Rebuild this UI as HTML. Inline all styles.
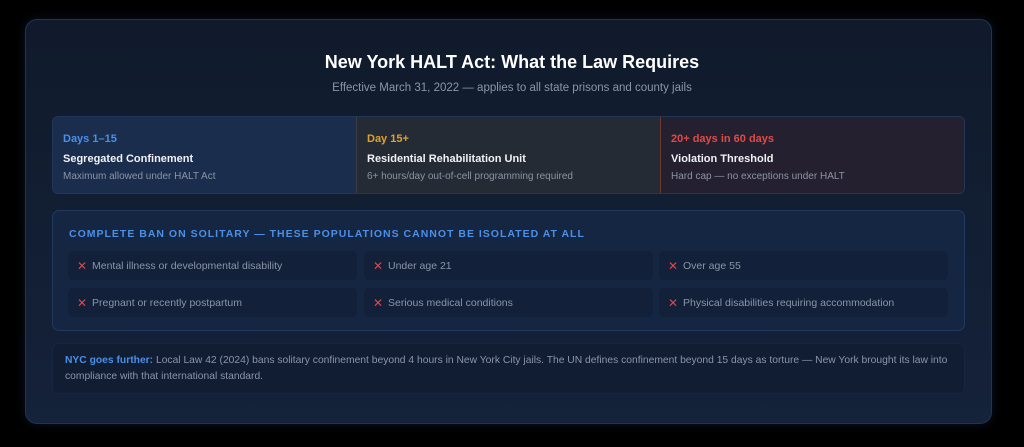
<!DOCTYPE html>
<html><head><style>
*{margin:0;padding:0;box-sizing:border-box}
body{width:1024px;height:447px;background:#000;font-family:"Liberation Sans",sans-serif;overflow:hidden;position:relative}
.card{position:absolute;left:25px;top:19px;width:967px;height:405px;border-radius:12px;border:1px solid #1f3557;background:linear-gradient(180deg,#101a2b 0%,#14223a 100%);box-shadow:0 0 10px rgba(40,80,140,.25)}
h1{position:absolute;left:0;width:100%;top:52px;text-align:center;color:#fff;font-size:18px;font-weight:bold}
.sub{position:absolute;left:0;width:100%;top:82px;text-align:center;color:#8a96a8;font-size:11.5px}
.tl{position:absolute;left:52px;top:116px;width:913px;height:78px;border-radius:6px;overflow:hidden;border:1px solid #223656;display:flex}
.seg{flex:1;padding:16px 10px}
.seg b{display:block;font-size:11px}
.seg .t{color:#f0f2f5;font-weight:bold;font-size:11px;margin-top:8px}
.seg .d{color:#8a94a4;font-size:10px;margin-top:6px}
.ban{position:absolute;left:52px;top:210px;width:913px;height:121px;border-radius:7px;border:1px solid #21395e;background:#152642}
.ban .h{position:absolute;left:16px;top:17px;color:#4a8fe8;font-size:10.5px;font-weight:bold;letter-spacing:1px}
.it{position:absolute;width:289px;height:29px;background:#12203a;border-radius:5px;color:#8a95a6;font-size:10.5px;line-height:30px;padding-left:24px}
.it:before{content:"✕";position:absolute;left:9px;color:#d9474b;font-size:12px}
.note{position:absolute;left:52px;top:343px;width:913px;height:51px;border-radius:6px;background:#111d33;border:1px solid #17263f;padding:9px 12px;color:#8a95a6;font-size:10.3px;line-height:15.5px}
.note b{color:#4a8fe8}
</style></head><body>
<div class="card"></div>
<h1>New York HALT Act: What the Law Requires</h1>
<div class="sub">Effective March 31, 2022 — applies to all state prisons and county jails</div>
<div class="tl">
<div class="seg" style="background:#1a2d4d"><b style="color:#4a8fe8">Days 1–15</b><div class="t">Segregated Confinement</div><div class="d">Maximum allowed under HALT Act</div></div>
<div class="seg" style="background:#252b34;border-left:1px solid #3a3c40;border-right:1px solid #6b3a2a"><b style="color:#e0a030">Day 15+</b><div class="t">Residential Rehabilitation Unit</div><div class="d">6+ hours/day out-of-cell programming required</div></div>
<div class="seg" style="background:#25202f"><b style="color:#e04a48">20+ days in 60 days</b><div class="t">Violation Threshold</div><div class="d">Hard cap — no exceptions under HALT</div></div>
</div>
<div class="ban"><div class="h">COMPLETE BAN ON SOLITARY — THESE POPULATIONS CANNOT BE ISOLATED AT ALL</div></div>
<div class="it" style="left:68px;top:251px">Mental illness or developmental disability</div>
<div class="it" style="left:364px;top:251px">Under age 21</div>
<div class="it" style="left:659px;top:251px">Over age 55</div>
<div class="it" style="left:68px;top:288px">Pregnant or recently postpartum</div>
<div class="it" style="left:364px;top:288px">Serious medical conditions</div>
<div class="it" style="left:659px;top:288px">Physical disabilities requiring accommodation</div>
<div class="note"><b>NYC goes further:</b> Local Law 42 (2024) bans solitary confinement beyond 4 hours in New York City jails. The UN defines confinement beyond 15 days as torture — New York brought its law into compliance with that international standard.</div>
</body></html>
